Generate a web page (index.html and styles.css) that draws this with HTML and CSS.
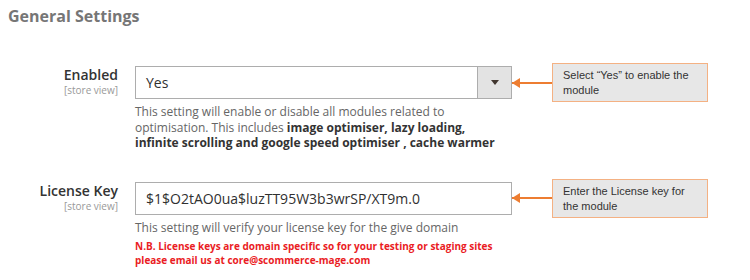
FILE: index.html
```html
<!DOCTYPE html>
<html lang="en">
<head>
    <meta charset="UTF-8">
    <title>General Settings</title>
    <link rel="stylesheet" href="styles.css">
</head>
<body>
    <div class="page">
        <h2 class="section-title">General Settings</h2>

        <!-- Enabled -->
        <div class="setting setting-enabled">
            <div class="setting-label">
                <span class="name">Enabled</span>
                <span class="scope">[store view]</span>
            </div>
            <div class="setting-field">
                <div class="control-line">
                    <div class="control select">
                        <span class="value">Yes</span>
                        <span class="select-btn"><span class="caret"></span></span>
                    </div>
                    <span class="callout-arrow"></span>
                    <div class="callout">Select “Yes” to enable the module</div>
                </div>
                <p class="note">This setting will enable or disable all modules related to<br>optimisation. This includes <b>image optimiser, lazy loading,<br>infinite scrolling and google speed optimiser , cache warmer</b></p>
            </div>
        </div>

        <!-- License Key -->
        <div class="setting setting-license">
            <div class="setting-label">
                <span class="name">License Key</span>
                <span class="scope">[store view]</span>
            </div>
            <div class="setting-field">
                <div class="control-line">
                    <div class="control">
                        <span class="value">$1$O2tAO0ua$luzTT95W3b3wrSP/XT9m.0</span>
                    </div>
                    <span class="callout-arrow"></span>
                    <div class="callout">Enter the License key for the module</div>
                </div>
                <p class="note">This setting will verify your license key for the give domain</p>
                <p class="warning">N.B. License keys are domain specific so for your testing or staging sites<br>please email us at core@scommerce-mage.com</p>
            </div>
        </div>
    </div>
</body>
</html>
```

FILE: styles.css
```css
body {
    margin: 0;
    background: #fff;
    font-family: 'Open Sans', sans-serif;
}

.page {
    padding: 5px 8px;
}

.section-title {
    margin: 0;
    font-size: 16px;
    line-height: 22px;
    font-weight: 700;
    color: #767676;
}

.setting {
    display: flex;
    margin-top: 39px;
}

.setting-license {
    margin-top: 31px;
}

.setting-label {
    width: 110px;
    margin-right: 17px;
    text-align: right;
}

.setting-label .name {
    display: block;
    font-size: 14px;
    line-height: 18px;
    font-weight: 600;
    color: #333;
}

.setting-label .scope {
    display: block;
    font-size: 10px;
    line-height: 12px;
    color: #999;
}

.setting-field {
    flex: 1;
}

.control-line {
    display: flex;
    align-items: center;
}

.control {
    width: 377px;
    height: 33px;
    box-sizing: border-box;
    border: 1px solid #adadad;
    background: #fff;
    display: flex;
    align-items: center;
}

.control .value {
    flex: 1;
    padding-left: 10px;
    font-size: 14px;
    color: #303030;
}

.select-btn {
    width: 33px;
    height: 100%;
    background: #e3e3e3;
    border-left: 1px solid #adadad;
    display: flex;
    align-items: center;
    justify-content: center;
}

.caret {
    width: 0;
    height: 0;
    border-left: 4px solid transparent;
    border-right: 4px solid transparent;
    border-top: 5px solid #41362f;
}

.callout-arrow {
    position: relative;
    width: 40px;
    height: 2px;
    background: #ed7d31;
}

.callout-arrow::before {
    content: '';
    position: absolute;
    left: 0;
    top: -4px;
    border-top: 5px solid transparent;
    border-bottom: 5px solid transparent;
    border-right: 8px solid #ed7d31;
}

.callout {
    width: 156px;
    height: 39px;
    margin: -3px 0;
    box-sizing: border-box;
    padding: 4px 10px;
    background: #e7e7e7;
    border: 1px solid #f4b183;
    font-family: 'Liberation Sans', Arial, sans-serif;
    font-size: 11px;
    line-height: 15px;
    color: #333;
}

.note {
    margin: 5px 0 0;
    font-size: 12px;
    line-height: 15.5px;
    color: #666;
}

.note b {
    font-weight: 700;
    color: #333;
}

.warning {
    margin: 4px 0 0;
    font-size: 10px;
    line-height: 14px;
    font-weight: 700;
    color: #ea1c24;
}
```
